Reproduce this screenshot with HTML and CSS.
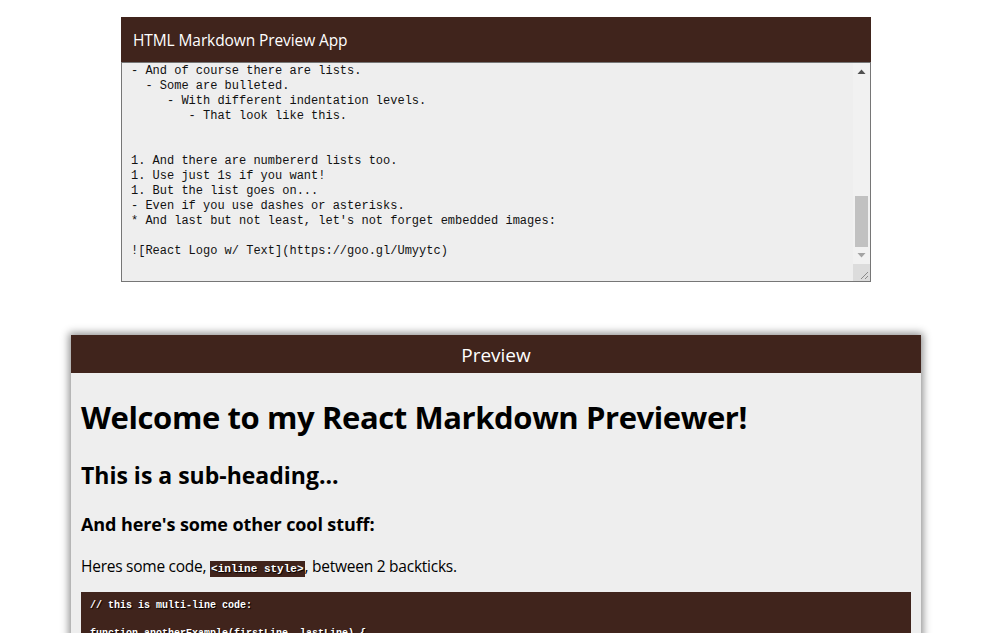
FILE: index.html
```html
<!DOCTYPE html>
<html lang="en">
<head>
<meta charset="utf-8">
<title>HTML Markdown Preview App</title>
<link rel="stylesheet" href="styles.css">
</head>
<body>
<div class="page">
  <section class="editor-wrap">
    <div class="toolbar">HTML Markdown Preview App</div>
    <div class="editor">
      <pre class="editor-text">- And of course there are lists.
  - Some are bulleted.
     - With different indentation levels.
        - That look like this.


1. And there are numbererd lists too.
1. Use just 1s if you want!
1. But the list goes on...
- Even if you use dashes or asterisks.
* And last but not least, let's not forget embedded images:

![React Logo w/ Text](https://goo.gl/Umyytc)
</pre>
      <div class="scrollbar">
        <div class="sb-btn"><svg width="9" height="5" viewBox="0 0 9 5"><path d="M0.5 5 L4.5 0.5 L8.5 5 Z" fill="#505050"/></svg></div>
        <div class="sb-track"><div class="sb-thumb"></div></div>
        <div class="sb-btn"><svg width="9" height="5" viewBox="0 0 9 5"><path d="M0.5 0 L4.5 4.5 L8.5 0 Z" fill="#a3a3a3"/></svg></div>
        <div class="resizer"><svg width="17" height="17" viewBox="0 0 17 17"><path d="M15 8 L8 15 M15 12 L12 15" stroke="#8a8a8a" stroke-width="1"/></svg></div>
      </div>
    </div>
  </section>

  <section class="preview-wrap">
    <div class="preview-bar">Preview</div>
    <div class="preview">
      <h1>Welcome to my React Markdown Previewer!</h1>
      <h2>This is a sub-heading...</h2>
      <h3>And here's some other cool stuff:</h3>
      <p>Heres some code, <code>&lt;inline style&gt;</code>, between 2 backticks.</p>
      <pre class="code-block">// this is multi-line code:

function anotherExample(firstLine, lastLine) {
  if (firstLine == '```' &amp;&amp; lastLine == '```') {
    return multiLineCode;
  }
}</pre>
    </div>
  </section>
</div>
</body>
</html>
```

FILE: styles.css
```css
html, body {
  margin: 0;
  padding: 0;
  background: #ffffff;
  overflow: hidden;
}

body {
  font-family: "Open Sans", "Noto Sans", sans-serif;
  color: #000;
}

.page {
  width: 850px;
  margin-left: 71px;
  padding-top: 17px;
}

.editor-wrap {
  width: 750px;
  margin: 0 50px;
}

.toolbar {
  height: 45px;
  background: #40241c;
  color: #ffffff;
  font-size: 15.5px;
  letter-spacing: -0.1px;
  line-height: 22px;
  display: flex;
  align-items: center;
  padding-left: 12px;
}

.editor {
  height: 220px;
  box-sizing: border-box;
  border: 1px solid #767676;
  background: #eeeeee;
  display: flex;
}

.editor-text {
  flex: 1;
  margin: 0;
  padding: 1px 0 0 9px;
  font-family: "Liberation Mono", monospace;
  font-size: 12px;
  line-height: 15px;
  color: #111;
  white-space: pre;
  overflow: hidden;
}

.scrollbar {
  width: 17px;
  display: flex;
  flex-direction: column;
  background: #f1f1f1;
}

.sb-btn {
  height: 17px;
  display: flex;
  align-items: center;
  justify-content: center;
}

.sb-track {
  flex: 1;
  display: flex;
  flex-direction: column;
  justify-content: flex-end;
}

.sb-thumb {
  height: 51px;
  margin: 0 2px;
  background: #c1c1c1;
}

.resizer {
  height: 17px;
  background: #dcdcdc;
}

.resizer svg {
  display: block;
}

.preview-wrap {
  margin-top: 53px;
  width: 850px;
  box-shadow: 0 0 8px 2px rgba(0, 0, 0, 0.45);
}

.preview-bar {
  height: 38px;
  background: #40241c;
  color: #ffffff;
  font-size: 19px;
  line-height: 26px;
  display: flex;
  align-items: center;
  justify-content: center;
  padding-top: 2px;
  box-sizing: border-box;
}

.preview {
  display: flow-root;
  background: #eeeeee;
  padding: 0 10px 20px;
}

.preview h1 {
  font-size: 31px;
  letter-spacing: -0.4px;
  line-height: 40px;
  font-weight: 700;
  margin: 24px 0 0;
}

.preview h2 {
  font-size: 23px;
  line-height: 30px;
  font-weight: 700;
  margin: 23px 0 0;
}

.preview h3 {
  font-size: 18px;
  letter-spacing: -0.1px;
  line-height: 24px;
  font-weight: 700;
  margin: 22px 0 0;
}

.preview p {
  font-size: 15.5px;
  letter-spacing: -0.25px;
  line-height: 22px;
  margin: 19px 0 0;
}

.preview code {
  font-family: "Liberation Mono", monospace;
  font-size: 11px;
  letter-spacing: 0;
  line-height: 12px;
  font-weight: 700;
  background: #40241c;
  color: #ffffff;
  padding: 2px 1px;
  text-shadow: 1px 1px 1px #000;
}

.code-block {
  margin: 15px 0 0;
  background: #40241c;
  color: #ffffff;
  font-family: "Liberation Mono", monospace;
  font-size: 10px;
  font-weight: 700;
  line-height: 14px;
  padding: 7px 9px 10px;
  text-shadow: 1px 1px 1px #000;
}
```
